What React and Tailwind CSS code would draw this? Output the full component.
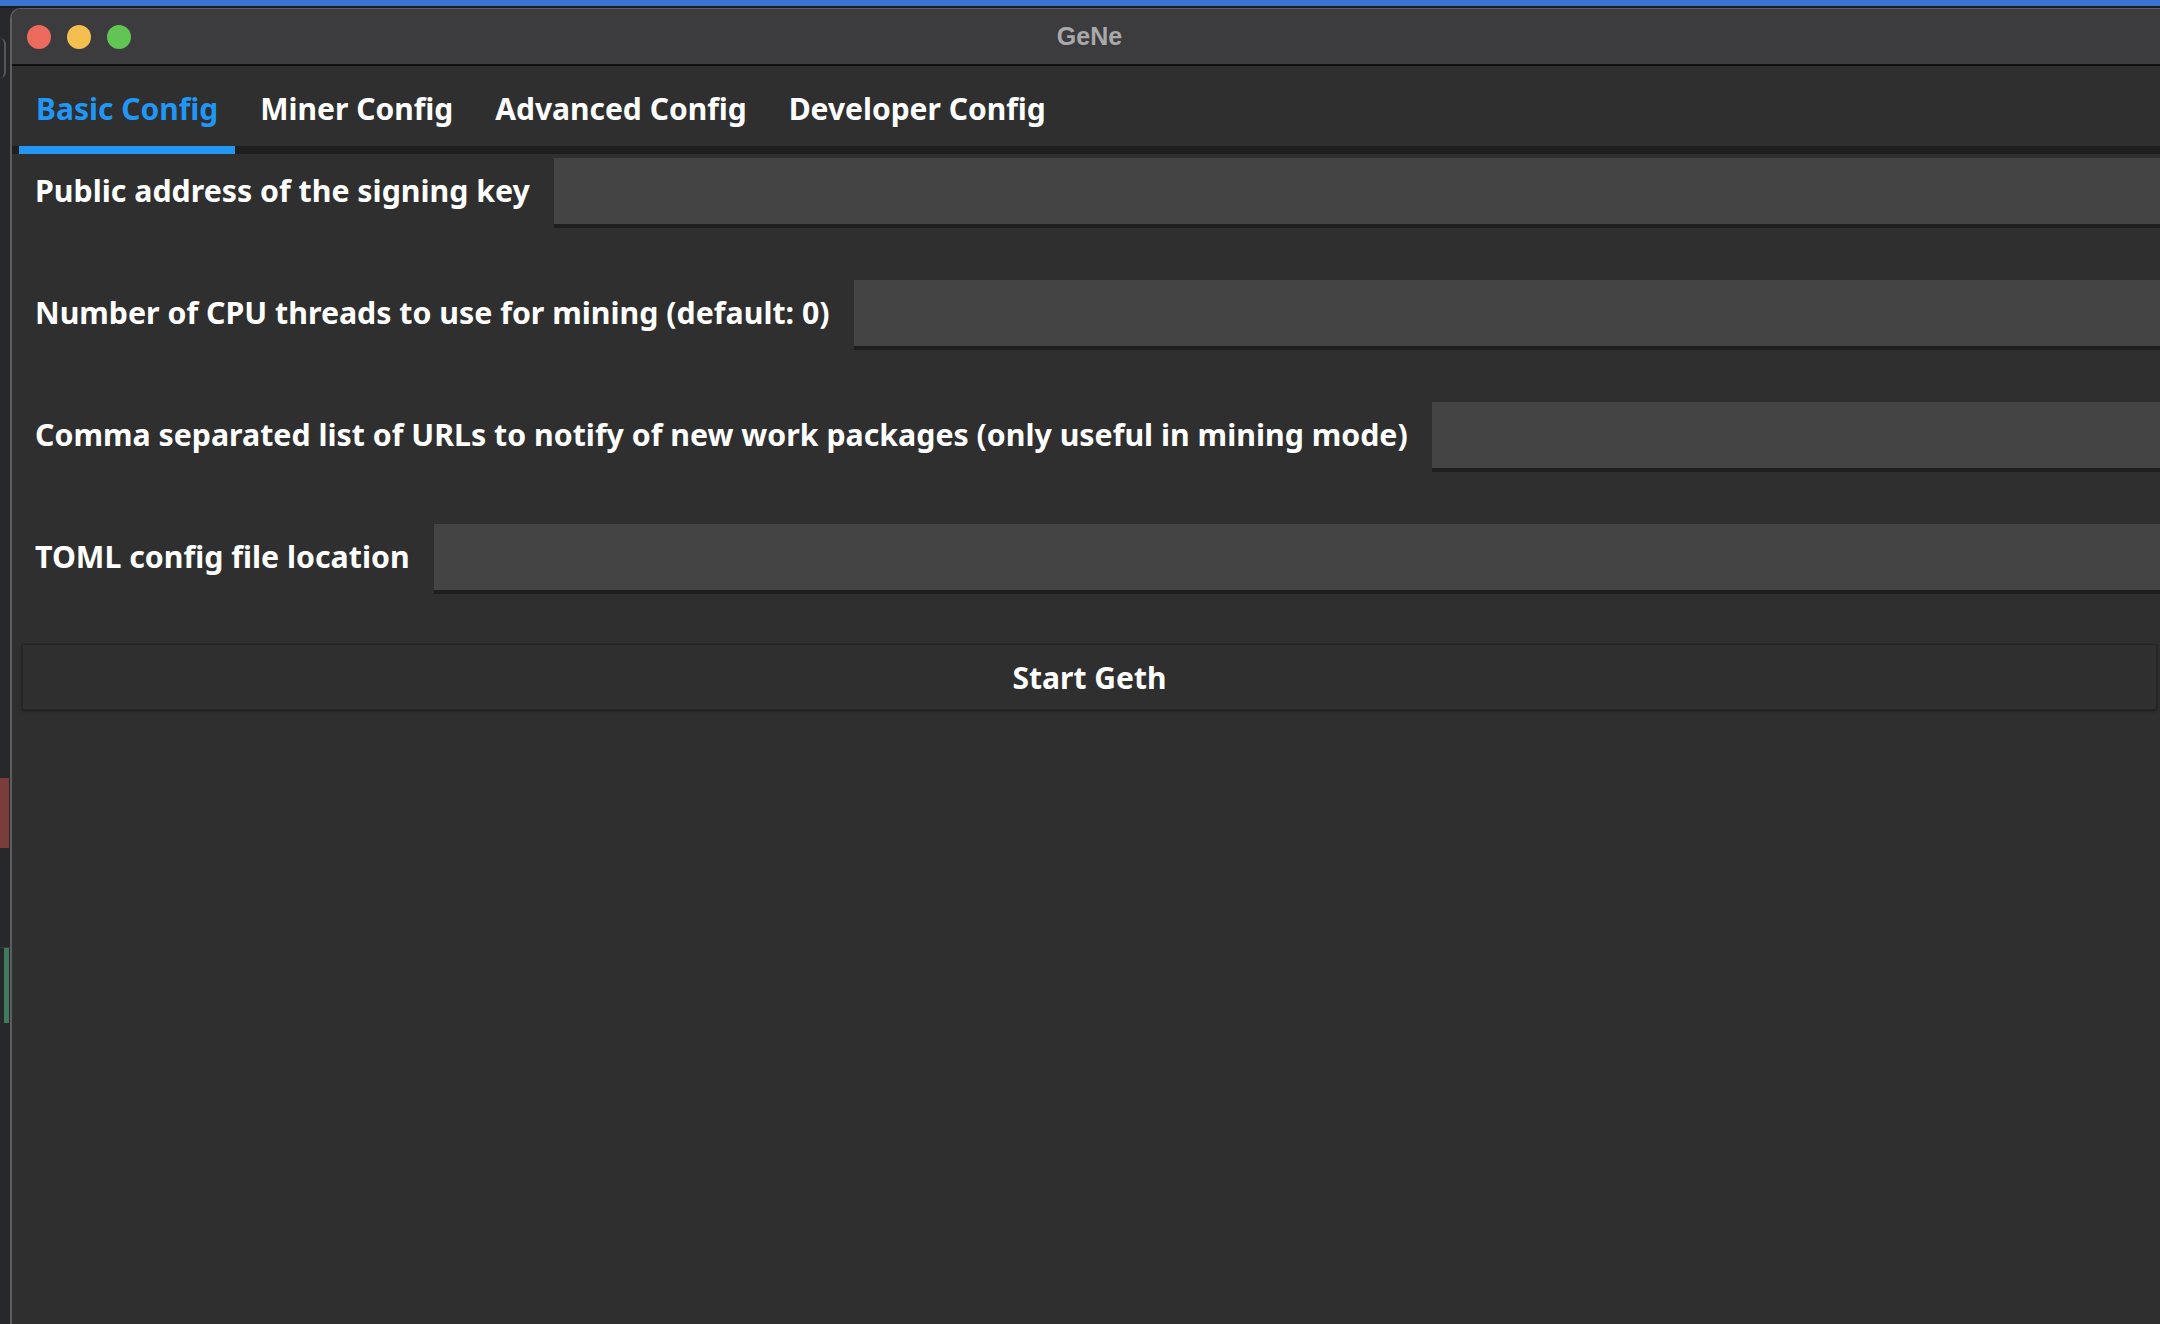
import React, { useState } from 'react';

const tabs = ["Basic Config", "Miner Config", "Advanced Config", "Developer Config"];

const fields = [
  "Public address of the signing key",
  "Number of CPU threads to use for mining (default: 0)",
  "Comma separated list of URLs to notify of new work packages (only useful in mining mode)",
  "TOML config file location",
];

const App = () => {
  const [activeTab, setActiveTab] = useState("Basic Config");
  const [values, setValues] = useState(fields.map(() => ""));

  return (
    <div className="w-[2160px] h-[1324px] overflow-hidden flex flex-col bg-[#27282c] font-['Noto_Sans',sans-serif]">
      <div className="h-[6px] bg-[#3a73d2]"></div>
      <div className="h-[2px] bg-[#1a1b1f]"></div>

      <div className="flex flex-1 min-h-0">
        {/* desktop peeking out on the left */}
        <div className="w-[10px] flex flex-col">
          <div className="h-[30px]"></div>
          <div className="h-[40px] w-[6px] rounded-r-full border-r-2 border-[#55575c]"></div>
          <div className="h-[700px]"></div>
          <div className="h-[70px] w-[9px] bg-[#7a3d39]"></div>
          <div className="h-[100px] border-b border-[#3a3b40]"></div>
          <div className="h-[75px] w-[9px] border-r-[5px] border-[#3f7a5c]"></div>
        </div>

        {/* window */}
        <div className="flex-1 min-w-0 flex flex-col rounded-tl-[10px] border-l-2 border-t border-[#5e5e60] overflow-hidden">
          <div className="h-[55px] bg-[#3c3c3e] flex items-center">
            <div className="flex gap-[16px] pl-[15px]">
              <div className="w-[24px] h-[24px] rounded-full bg-[#ec6a5e]"></div>
              <div className="w-[24px] h-[24px] rounded-full bg-[#f4bf4f]"></div>
              <div className="w-[24px] h-[24px] rounded-full bg-[#61c554]"></div>
            </div>
            <div className="flex-1 flex justify-center pr-[112px]">
              <span className="font-['Liberation_Sans',sans-serif] font-bold text-[25px] text-[#a9a9ab]">GeNe</span>
            </div>
          </div>
          <div className="h-[2px] bg-[#111112]"></div>

          <div className="flex-1 bg-[#2f2f2f] flex flex-col">
            <div className="flex pl-[7px] border-b-[8px] border-[#1e1e1e]">
              {tabs.map(tab => (
                <button
                  key={tab}
                  onClick={() => setActiveTab(tab)}
                  className={
                    tab === activeTab
                      ? "h-[88px] pt-[6px] px-[17px] mr-[8px] -mb-[8px] border-b-[8px] border-[#2196f3] text-[30px] font-bold text-[#2196f3] leading-none"
                      : "h-[88px] pt-[6px] px-[17px] mr-[8px] -mb-[8px] border-b-[8px] border-transparent text-[30px] font-bold text-white leading-none"
                  }
                >
                  {tab}
                </button>
              ))}
            </div>

            <div className="flex flex-col gap-[52px] pt-[4px] pl-[23px]">
              {fields.map((label, i) => (
                <div key={label} className="flex items-center gap-[24px] h-[70px]">
                  <span className="pb-[5px] text-[30.3px] font-bold text-white whitespace-nowrap">{label}</span>
                  <input
                    type="text"
                    value={values[i]}
                    onChange={(e) => {
                      const next = [...values];
                      next[i] = e.target.value;
                      setValues(next);
                    }}
                    className="flex-1 min-w-0 h-[70px] bg-[#444444] border-b-[4px] border-[#1e1e1e] outline-none text-[30px] text-white px-4"
                  />
                </div>
              ))}
            </div>

            <div className="pl-[10px] pr-[3px] pt-[50px]">
              <button className="w-full h-[66px] bg-[#2f2f2f] border border-[#242424] shadow-[0_1px_3px_rgba(0,0,0,0.4)] text-[30px] font-bold text-white">
                Start Geth
              </button>
            </div>
          </div>
        </div>
      </div>
    </div>
  );
};

export default App;
